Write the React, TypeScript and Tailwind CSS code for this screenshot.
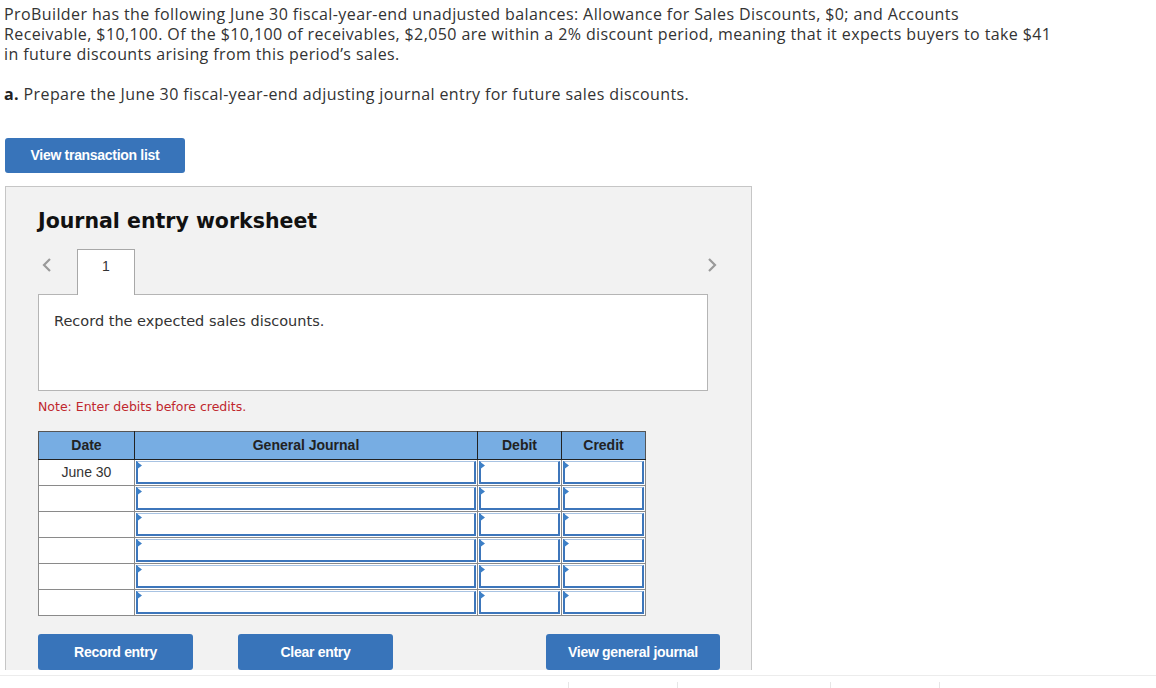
import React from "react";

const rows = ["June 30", "", "", "", "", ""];

const Chevron = ({ dir }: { dir: "left" | "right" }) => (
  <svg width="10" height="16" viewBox="0 0 10 16" className="shrink-0">
    <polyline
      points={dir === "left" ? "8,2 2,8 8,14" : "2,2 8,8 2,14"}
      fill="none"
      stroke="#9a9a9a"
      strokeWidth="2.2"
    />
  </svg>
);

const InputCell = () => (
  <td className="h-[26px] border border-[#8a8a8a] p-0 align-top">
    <div className="relative mx-[1px] mt-[1px] h-[23px] border-2 border-t border-[#3d76bb] border-t-[#a8c3e3] bg-white">
      {/* little marker in the corner */}
      <svg width="6" height="9" viewBox="0 0 6 9" className="absolute -left-[2px] -top-[1px]">
        <polygon points="0,0 6,4.5 0,9" fill="#3d7fc6" />
      </svg>
    </div>
  </td>
);

const BlueButton = ({ label, className }: { label: string; className?: string }) => (
  <button
    className={
      "shrink-0 rounded-[3px] bg-[#3874ba] text-white text-[14px] font-bold tracking-[-0.3px] font-['Liberation_Sans',Arial,sans-serif] " +
      (className ?? "")
    }
  >
    {label}
  </button>
);

export default function App() {
  return (
    <div className="w-[1156px] h-[688px] overflow-hidden bg-white">
      {/* Question text */}
      <div className="pl-[4px] pt-[4px] text-[16px] leading-[20px] tracking-[0.4px] text-[#333] font-['Open_Sans',sans-serif]">
        <p>
          <span className="block whitespace-nowrap">
            ProBuilder has the following June 30 fiscal-year-end unadjusted balances: Allowance for Sales Discounts, $0; and Accounts
          </span>
          <span className="block whitespace-nowrap">
            Receivable, $10,100. Of the $10,100 of receivables, $2,050 are within a 2% discount period, meaning that it expects buyers to take $41
          </span>
          <span className="block whitespace-nowrap">in future discounts arising from this period’s sales.</span>
        </p>
        <p className="mt-[20px]">
          <b className="font-bold text-[#222]">a.</b> Prepare the June 30 fiscal-year-end adjusting journal entry for future sales discounts.
        </p>
      </div>

      <div className="pl-[5px] mt-[34px] flex">
        <BlueButton label="View transaction list" className="w-[180px] h-[35px]" />
      </div>

      {/* Worksheet panel, clipped at the bottom */}
      <div className="ml-[5px] mt-[13px] h-[484px] w-[747px] overflow-hidden">
        <div className="h-[520px] border border-[#c6c6c6] bg-[#f2f2f2] pl-[32px] pr-[43px] pt-[20px]">
          <h2 className="text-[20.5px] leading-[28px] font-bold text-[#111] font-['DejaVu_Sans',Verdana,sans-serif]">
            Journal entry worksheet
          </h2>

          {/* Tabs */}
          <div className="mt-[14px] flex items-start">
            <div className="w-[39px] pl-[4px] pt-[8px] flex">
              <Chevron dir="left" />
            </div>
            <div className="relative z-10 -mb-[1px] h-[46px] w-[58px] border border-b-0 border-[#a8a8a8] bg-white pt-[6px] text-center text-[14px] text-[#333] font-['Liberation_Sans',Arial,sans-serif]">
              1
            </div>
            <div className="flex-1" />
            <div className="-mr-[9px] pt-[8px]">
              <Chevron dir="right" />
            </div>
          </div>

          <div className="h-[97px] w-[670px] border border-[#b5b5b5] bg-white pl-[15px] pt-[16px] text-[14.5px] leading-[20px] text-[#333] font-['DejaVu_Sans',Verdana,sans-serif]">
            Record the expected sales discounts.
          </div>

          <p className="mt-[8px] text-[12.5px] leading-[16px] text-[#c0272d] font-['DejaVu_Sans',Verdana,sans-serif]">
            Note: Enter debits before credits.
          </p>

          <table className="mt-[16px] border-collapse table-fixed w-[608px] font-['Liberation_Sans',Arial,sans-serif]">
            <colgroup>
              <col className="w-[96px]" />
              <col className="w-[343px]" />
              <col className="w-[84px]" />
              <col className="w-[84px]" />
            </colgroup>
            <thead>
              <tr className="h-[28px] bg-[#77ade3] text-[14px] font-bold text-[#222]">
                <th className="border border-[#555] border-b-[#222] border-r-[#222]">Date</th>
                <th className="border border-[#555] border-b-[#222] border-r-[#222]">General Journal</th>
                <th className="border border-[#555] border-b-[#222] border-r-[#222]">Debit</th>
                <th className="border border-[#555] border-b-[#222]">Credit</th>
              </tr>
            </thead>
            <tbody>
              {rows.map((d, i) => (
                <tr key={i} className="h-[26px] bg-white">
                  <td className="border border-[#8a8a8a] text-center text-[14px] text-[#333]">{d}</td>
                  <InputCell />
                  <InputCell />
                  <InputCell />
                </tr>
              ))}
            </tbody>
          </table>

          <div className="mt-[18px] flex">
            <BlueButton label="Record entry" className="h-[36px] w-[155px]" />
            <BlueButton label="Clear entry" className="h-[36px] ml-[45px] w-[155px]" />
            <BlueButton label="View general journal" className="h-[36px] ml-[153px] w-[174px]" />
          </div>
        </div>
      </div>

      {/* Start of the next section, mostly off-screen */}
      <div className="mt-[5px] border-t border-[#ececec]">
        <div className="mt-[6px] flex h-[12px]">
          <div className="w-[568px]" />
          <div className="w-[109px] border-l border-[#e6e6e6]" />
          <div className="w-[153px] border-l border-[#e6e6e6]" />
          <div className="w-[109px] border-l border-[#e6e6e6]" />
          <div className="border-l border-[#e6e6e6]" />
        </div>
      </div>
    </div>
  );
}
